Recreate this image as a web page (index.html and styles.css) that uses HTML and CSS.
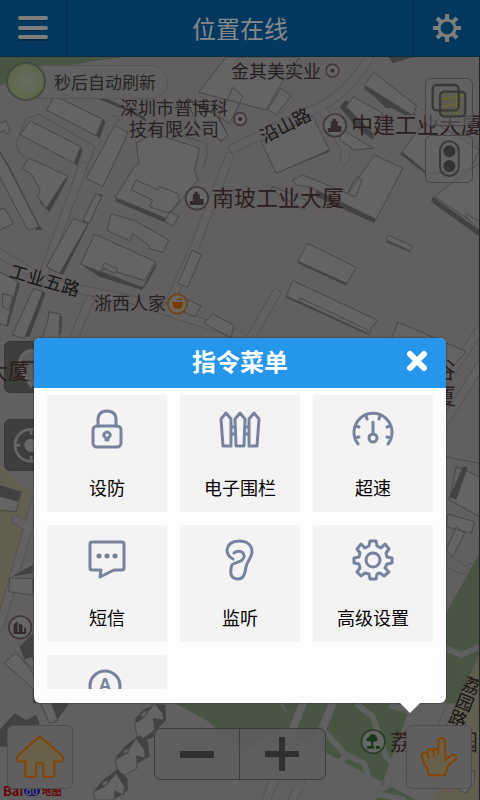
FILE: index.html
```html
<!DOCTYPE html>
<html lang="zh-CN">
<head>
    <meta charset="UTF-8">
    <meta name="viewport" content="width=device-width, initial-scale=1.0">
    <title>位置在线</title>
    <link rel="stylesheet" href="styles.css">
</head>
<body>
    <header class="topbar">
        <button class="top-btn menu-btn" aria-label="菜单">
            <svg width="30" height="26" viewBox="0 0 30 26"><path class="menu-shadow" d="M2 4h26M2 14h26M2 24h26"/><path class="menu-line" d="M2 3h26M2 13h26M2 22h26"/></svg>
        </button>
        <h1>位置在线</h1>
        <button class="top-btn set-btn" aria-label="设置">
            <svg width="30" height="30" viewBox="-15 -15 30 30">
                <circle class="cog-ring" r="8"/>
                <path class="cog-teeth" d="M0-14V-9M0 14V9M-14 0H-9M14 0H9M-10-10L-6-6M10-10L6-6M-10 10L-6 6M10 10L6 6"/>
            </svg>
        </button>
    </header>

    <main class="map">
        <svg class="map-art" viewBox="0 171 1440 2229" preserveAspectRatio="xMidYMid slice">
            <!-- parks and ground -->
            <path class="park" d="M0 171H380Q200 190 90 225L0 258Z"/>
            <path class="park" d="M1860 1838L1440 1660L1340 1838V2110H1530L1400 2400H1130L1240 2100H720L520 2106L620 2160L720 2240V2110H850L870 2160L850 2190L1250 2400H1310L1350 2200L1440 1960Z"/>
            <path class="park" d="M520 2100L620 2160L720 2240V2260L880 2170L840 2110Z"/>
            <path class="sand" d="M0 1390L66 1460L100 1470V1525L30 1820L0 1900Z"/>
            <path class="sand" d="M1440 1960L1345 2180L1310 2400H1440Z"/>
            <!-- roads -->
            <path class="road-edge" d="M1110 171Q1040 290 940 330L700 445M970 330L1040 450L1035 480M690 470L590 730L500 930M250 500L135 815M0 760L150 850L400 900L720 1005M270 900L225 1010M830 880L750 1020M110 1500L0 1880M50 1560L100 1590M1000 2110L880 2400M910 2110L800 2400M1440 990L1240 1290M1440 1100L1240 1420"/>
            <path class="road" d="M1110 171Q1040 290 940 330L700 445M970 330L1040 450L1035 480M690 470L590 730L500 930M250 500L135 815M0 760L150 850L400 900L720 1005M270 900L225 1010M830 880L750 1020M110 1500L0 1880M50 1560L100 1590M1000 2110L880 2400M910 2110L800 2400M1440 990L1240 1290M1440 1100L1240 1420"/>
            <path class="trail" d="M1340 1945L1385 1965L1440 1940M1070 2110L1120 2150L1160 2270L1220 2330M960 2180L1040 2265L1000 2310L1020 2400M1040 2265L1095 2290L1120 2380M1220 2330L1120 2380L1000 2390L870 2345M1170 2115L1290 2150M1330 2110L1290 2190M1120 2380L1220 2400"/>
            <path class="road-edge line" d="M1440 1950L1310 2250M1430 1920L1290 2230"/>

            <!-- blocks, upper left -->
            <path class="shade" d="M141 330L290 407L300 417L318 365L310 358L165 292ZM62 400L225 490L232 500L250 450L240 440L90 370ZM285 292L400 340L440 365L435 350L300 285Z"/>
            <path class="roof" d="M165 288L310 358L290 407L141 330ZM92 362L244 440L224 490L62 404ZM345 377L386 398L310 560L260 535ZM0 370L20 362L32 395L20 402L14 392L0 395Z"/>
            <path class="outline" d="M50 430L80 355L120 343L287 440L260 510M50 430L60 460L120 500M335 350Q360 340 358 360L345 377M500 390L620 430L625 460L610 510"/>
            <path class="shade" d="M0 450L30 500L120 678L130 690L110 690L0 480ZM205 535L150 637L120 605L130 600L145 615L190 530Z"/>
            <path class="roof" d="M0 458L26 500L118 680L85 690L0 530ZM88 474L205 528L195 540L140 625L115 590L122 570L98 525L68 505ZM0 630L15 625L42 670L0 692Z"/>
            <path class="shade" d="M347 595L500 655L498 668L350 605ZM250 665L270 670L310 585L300 582ZM175 815L190 825L268 672L258 672ZM244 793L316 818L430 862L468 790L470 800L445 845L428 870L300 830Z"/>
            <path class="roof" d="M410 430L465 400L600 445L585 510L595 540L500 655L347 592L405 500L418 490ZM290 580L306 590L270 670L250 660ZM222 655L265 672L180 820L140 800ZM335 642L402 660L508 720L490 757L450 745L447 735L400 700L390 722L322 692ZM285 702L468 785L435 842L318 805L300 815L244 792Z"/>
            <path class="roof" d="M410 540L475 570L480 560L535 580L540 600L510 640L450 620L460 600L395 570ZM510 635L537 650L520 678L495 665ZM315 788L355 808L345 820L308 802Z"/>
            <path class="shade" d="M15 975L25 980L62 850L50 845ZM70 1010L90 1010L138 880L128 872ZM175 1010L185 1000L188 950L178 940Z"/>
            <path class="roof" d="M0 815L55 845L20 978L0 970ZM102 865L130 875L75 1015L38 1005ZM10 880L40 890L28 930L8 920ZM148 935L182 942L178 1020H125L145 960Z"/>

            <!-- blocks, upper middle -->
            <path class="shade" d="M560 290L660 350L685 405L665 425L600 370Z"/>
            <path class="roof" d="M680 171H900L840 260L800 330L598 277ZM560 300L650 345L685 405L668 422L600 385ZM700 262L730 290L690 370L660 350ZM845 265L875 288L830 345L805 328Z"/>
            <path class="shade" d="M785 420L830 520L990 455L985 445L830 505ZM1092 263L1110 250L1250 345H1215L1180 325L1160 325L1125 290ZM1020 320L1040 300L1130 370L1120 420L1070 380ZM1300 590L1440 690V710L1295 605ZM1205 455L1285 515L1275 520L1202 462ZM950 570L1130 655L1125 670L950 590ZM1167 171L1180 190L1240 171Z"/>
            <path class="roof" d="M785 425L940 350L990 450L830 520ZM1122 217L1252 318L1238 345L1095 255ZM1062 290L1150 340L1125 405L1040 320ZM1030 390L1122 445L1065 450L1020 420ZM1125 465L1210 505L1130 658L930 560L890 555L880 540L910 525L1045 580ZM1070 530L1088 540L1068 592L1044 580ZM1285 355L1440 450L1410 510L1285 520L1207 455ZM1370 540L1440 490V680L1305 590Z"/>
            <path class="roof" d="M1400 640L1440 665V690L1400 650ZM820 560L920 600L915 630L815 570Z"/>

            <!-- blocks, middle right -->
            <path class="shade" d="M895 785L1042 848L1038 856L895 790ZM860 888L1110 998L1108 1005L860 893ZM1160 722L1232 750L1230 756L1160 726Z"/>
            <path class="roof" d="M924 730L1070 802L1042 850L895 784ZM880 842L1133 960L1125 975L1120 975L1108 1003L860 888ZM902 894L1105 990L1100 998L898 904ZM1166 705L1238 738L1232 753L1160 720ZM578 750L606 764L564 862L535 850ZM640 942L703 975L695 1013L613 970ZM525 880L605 918L585 950L500 910ZM1195 966L1400 1055L1350 1110H1140Z"/>

            <!-- blocks around the dialog -->
            <path class="roof" d="M0 1460L65 1475L50 1535L0 1530ZM30 1735L100 1735V1785L28 1775ZM1370 1400L1440 1430V1550L1350 1500ZM1345 1542L1425 1565L1415 1600L1340 1580ZM1370 1580L1395 1600L1360 1670L1340 1650ZM1285 1350L1360 1375L1440 1390"/>
            <path class="shade" d="M0 1455L65 1475L55 1505L0 1490ZM1405 1400L1370 1500L1350 1490L1390 1400ZM60 1940L100 1900V2110L210 2110L165 2170L100 2040ZM0 2190L45 2140L80 2160L110 2145L120 2170L60 2240L0 2240ZM35 1730L100 1695V1720Z"/>
            <path class="roof" d="M48 1958L125 2030L175 2160L150 2170L105 2070L15 1990ZM70 1980L95 1970L130 2025L110 2035Z"/>
            <path class="outline" d="M1340 1680L1360 1670L1400 1700L1410 1690L1440 1705M1340 1700L1380 1720L1440 1725"/>

            <!-- stepped houses along the path -->
            <path class="shade" d="M405 2160L430 2130L470 2112L498 2115L500 2160L470 2190L460 2200L485 2200L430 2225Z"/>
            <path class="roof" d="M405 2170L430 2155L465 2110L490 2140L492 2160L462 2155L465 2190L440 2210L415 2225ZM425 2140L443 2130L440 2145L425 2155Z"/>
            <path class="shade" d="M350 2270L375 2240L420 2205L445 2225L450 2270L415 2290L380 2320Z"/>
            <path class="roof" d="M347 2280L380 2260L410 2215L435 2250L437 2275L412 2268L412 2305L375 2325L355 2320ZM373 2250L388 2245L386 2260L373 2262Z"/>
            <path class="shade" d="M285 2370L310 2340L355 2308L383 2335L386 2370L350 2395H300Z"/>
            <path class="roof" d="M282 2375L315 2360L350 2320L375 2360L372 2385L345 2372V2400H285ZM310 2345L325 2340L323 2355L308 2357Z"/>
            <path class="roof" d="M1410 2320L1425 2310V2345L1400 2380L1380 2370Z"/>

            <!-- place markers -->
            <g class="marker"><circle cx="999" cy="212" r="19"/><circle class="dot" cx="999" cy="212" r="6"/></g>
            <g class="marker"><circle cx="722" cy="357" r="19"/><circle class="dot" cx="722" cy="357" r="6"/></g>
            <g class="marker"><circle cx="1006" cy="376" r="34"/><path class="dot" d="M985 396V384H994V364H999V356H1009V364H1015V378H1026V396Z"/></g>
            <g class="marker"><circle cx="592" cy="595" r="34"/><path class="dot" d="M571 615V603H580V583H585V575H595V583H601V597H612V615Z"/></g>
            <g class="marker"><circle cx="62" cy="1882" r="34"/><path class="dot" d="M42 1902V1874L54 1864V1896H58V1870L69 1876V1896H74V1882L80 1884V1902Z"/></g>
            <g class="marker food"><circle cx="534" cy="912" r="29"/><path class="dot" d="M518 906H551Q550 920 542 926H527Q519 920 518 906ZM527 900L545 895L551 900Z"/></g>
            <g class="marker tree"><circle cx="1121" cy="2225" r="35"/><path class="dot" d="M1101 2222Q1100 2214 1108 2212Q1110 2203 1119 2203Q1130 2204 1132 2213Q1139 2220 1129 2224L1121 2225V2238H1124V2246H1103V2238H1115V2225ZM1129 2238H1141V2246H1129Z"/></g>
        </svg>

        <span class="place p-jinqi">金其美实业</span>
        <span class="place p-pubo">深圳市普博科<br>技有限公司</span>
        <span class="place p-yanshan">沿山路</span>
        <span class="place large p-zhongjian">中建工业大厦</span>
        <span class="place large p-nanbo">南玻工业大厦</span>
        <span class="place p-wulu">工业五路</span>
        <span class="place p-zhexi">浙西人家</span>
        <span class="place large p-left">大厦</span>
        <span class="place large p-right">谷<br>厦</span>
        <span class="place p-liyuan">荔园路</span>
        <span class="place large p-park">荔枝公园</span>

        <div class="refresh"><span class="refresh-dot"></span><span class="refresh-text">秒后自动刷新</span></div>

        <div class="tools-right">
            <button aria-label="图层">
                <svg width="46" height="46" viewBox="0 0 138 138">
                    <rect class="sheet-back" x="42" y="38" width="76" height="74" rx="12"/>
                    <path class="sheet-map" d="M50 60L112 50M50 82L112 72M92 44V106"/>
                    <rect class="sheet" x="20" y="18" width="78" height="76" rx="12"/>
                </svg>
            </button>
            <button aria-label="路况">
                <svg width="46" height="46" viewBox="0 0 138 138">
                    <rect class="lamp-box" x="42" y="16" width="56" height="104" rx="28"/>
                    <circle class="lamp" cx="70" cy="46" r="18"/><circle class="lamp" cx="70" cy="90" r="18"/>
                </svg>
            </button>
        </div>

        <div class="tools-left">
            <button aria-label="车辆"><svg width="50" height="50" viewBox="0 0 150 150"><path class="pin" d="M78 132Q44 84 44 62A36 36 0 0 1 116 62Q116 84 78 132Z"/><path class="pin-car" d="M54 76V60H106V76"/></svg></button>
            <button aria-label="定位"><svg width="50" height="50" viewBox="0 0 150 150"><circle class="aim" cx="78" cy="76" r="48"/><path class="aim" d="M78 28V44M78 108V124M30 76H46M110 76H126"/><circle class="aim-dot" cx="78" cy="76" r="20"/></svg></button>
        </div>

        <div class="logo"><b>Bai</b><i>du</i><b>地图</b></div>

        <button class="corner home" aria-label="主页">
            <svg width="64" height="62" viewBox="24 258 192 186"><path class="orange" d="M113 294Q119 289 126 294L186 348Q193 356 185 363Q178 368 163 362V405Q163 411 157 411H130V374Q130 370 126 370H112Q108 370 108 374V411H81Q76 411 76 405V362Q62 368 54 363Q46 356 53 348Z"/></svg>
        </button>

        <div class="zoom">
            <button aria-label="缩小"><svg width="34" height="34" viewBox="0 0 34 34"><rect y="14" width="34" height="7" rx="1"/></svg></button>
            <button aria-label="放大"><svg width="34" height="34" viewBox="0 0 34 34"><path d="M14 0H20V14H34V20H20V34H14V20H0V14H14Z"/></svg></button>
        </div>

        <button class="corner hand" aria-label="指令">
            <svg width="64" height="62" viewBox="502 260 192 186"><path class="orange" d="M568 408L562 387L552 372L547 349Q546 341 553 340Q560 339 564 345Q562 332 570 330Q577 329 581 338Q580 329 587 328Q593 328 596 334V305Q597 296 605 296Q614 296 615 305L618 361L637 347Q647 344 650 352Q651 356 646 361L627 378L615 408Z"/><path class="orange-line" d="M564 344L568 356M581 337L584 350M596 334V343"/></svg>
        </button>

        <section class="dialog" role="dialog" aria-labelledby="dialog-title">
            <div class="dialog-head">
                <h2 id="dialog-title">指令菜单</h2>
                <button class="close" aria-label="关闭"><svg width="22" height="22" viewBox="0 0 22 22"><path d="M4 4L18 18M18 4L4 18"/></svg></button>
            </div>
            <div class="dialog-body">
                <div class="tiles">
                    <button class="tile">
                        <svg viewBox="0 0 42 42"><rect x="7" y="17" width="28" height="21" rx="4"/><path d="M12 17V11Q12 2 21 2T30 11V17"/><path d="M20 31V29Q17 27 18 25Q21 21 24 25Q25 27 22 29V31Z"/></svg>
                        <span>设防</span>
                    </button>
                    <button class="tile">
                        <svg viewBox="0 0 42 42"><path d="M2 10L7 4L12 10V37H4ZM16 10L21 4L26 10L25 37H17ZM30 10L35 4L40 10L38 37H30ZM12 18H16M12 25H16M26 18H30M26 25H30"/></svg>
                        <span>电子围栏</span>
                    </button>
                    <button class="tile">
                        <svg viewBox="0 0 42 42"><path d="M6 35A19 19 0 1 1 36 35M21 13V25M14 7L15 10M28 7L27 10M4 17L7 18M38 17L35 18M3 29L7 28M39 29L35 28"/><circle cx="21" cy="29" r="4"/></svg>
                        <span>超速</span>
                    </button>
                    <button class="tile">
                        <svg viewBox="0 0 42 42"><path d="M6 3H36Q38 3 38 5V29Q38 31 36 31H28L14 38L15 31H6Q4 31 4 29V5Q4 3 6 3Z"/><path class="dots" d="M13 17H13.100M21 17H21.100M29 17H29.100"/></svg>
                        <span>短信</span>
                    </button>
                    <button class="tile">
                        <svg viewBox="0 0 42 42"><path d="M14 20C8 17 8 13 8 11C9 4 14 2 20 2C28 2 33 6 33 13C33 18 28 22 27 28C26 34 25 40 19 40C13 40 11 36 12 30C12 24 15 25 19 23C23 22 26 19 25 16C24 12 19 11 15 14"/></svg>
                        <span>监听</span>
                    </button>
                    <button class="tile">
                        <svg viewBox="0 0 42 42"><path d="M18 2H24L25 7L29 9L33 5L37 10L34 14L35 18L40 19V24L35 25L33 29L37 33L32 37L28 34L25 35L24 40H18L17 35L13 34L9 37L5 33L8 29L7 25L2 24V19L7 18L8 14L5 10L9 5L13 9L17 7Z"/><circle cx="21" cy="21" r="7"/></svg>
                        <span>高级设置</span>
                    </button>
                    <button class="tile">
                        <svg viewBox="0 0 42 42"><circle cx="19" cy="17" r="15"/><text class="letter" x="19" y="22">A</text></svg>
                    </button>
                </div>
            </div>
        </section>
    </main>
</body>
</html>
```
FILE: styles.css
```css
* { box-sizing: border-box; }
body { margin: 0; min-height: 100vh; display: flex; flex-direction: column; font-family: "Noto Sans CJK SC", "Liberation Sans", sans-serif; background: #625f60; overflow: hidden; }
button { padding: 0; border: none; background: none; font-family: inherit; cursor: pointer; }
svg { display: block; }
h1, h2 { margin: 0; font-size: 24px; line-height: 36px; }

/* top bar */
.topbar { display: flex; align-items: center; height: 57px; background: #05385e; border-bottom: 1px solid #0b2c45; }
.topbar h1 { flex: 1; text-align: center; font-weight: 400; color: #85898c; }
.top-btn { width: 67px; height: 56px; display: flex; align-items: center; justify-content: center; }
.menu-btn { border-right: 1px solid #032b49; }
.set-btn { border-left: 1px solid #032b49; }
.menu-line, .menu-shadow { stroke: #7d7d7d; stroke-width: 4; stroke-linecap: round; }
.menu-shadow { stroke: #072b46; }
.cog-ring { fill: none; stroke: #7d7d7d; stroke-width: 3; }
.cog-teeth { stroke: #7d7d7d; stroke-width: 4; }

/* map */
.map { position: relative; flex: 1; overflow: hidden; border-right: 1px solid #262626; }
.map-art { position: absolute; inset: 0; width: 100%; height: 100%; }
.park { fill: #485542; }
.sand { fill: #625f51; }
.road, .road-edge { fill: none; stroke-linecap: round; stroke-linejoin: round; }
.road-edge { stroke: #535152; stroke-width: 28; }
.road { stroke: #636162; stroke-width: 23; }
.line { stroke-width: 3; }
.trail { fill: none; stroke: #5e6060; stroke-width: 18; }
.roof { fill: #646464; stroke: #484747; stroke-width: 3; }
.shade { fill: #434242; }
.outline { fill: none; stroke: #505050; stroke-width: 3; }
.marker circle { fill: #666; stroke: #40373a; stroke-width: 5; }
.marker .dot { fill: #352a2c; stroke: none; }
.food circle { fill: #6a665f; stroke: #70411a; }
.food .dot { fill: #783b00; }
.tree circle { stroke: #263d24; }
.tree .dot { fill: #1b3519; }

.place { position: absolute; font-size: 18px; line-height: 21px; color: #252122; white-space: nowrap; text-align: center; }
.large { font-size: 22px; line-height: 26px; color: #2c1d1e; }
.p-jinqi { left: 231px; top: 3px; }
.p-pubo { left: 120px; top: 40px; }
.p-yanshan { left: 258px; top: 57px; transform: rotate(-27deg); color: #151515; }
.p-zhongjian { left: 351px; top: 53px; }
.p-nanbo { left: 212px; top: 126px; }
.p-wulu { left: 9px; top: 212px; transform: rotate(16deg); color: #151515; }
.p-zhexi { left: 94px; top: 235px; }
.p-left { left: -14px; top: 299px; z-index: 1; }
.p-right { left: 434px; top: 298px; }
.p-liyuan { left: 454px; top: 618px; writing-mode: vertical-rl; transform: rotate(22deg); color: #151515; }
.p-park { left: 390px; top: 670px; }

/* map controls */
.refresh { position: absolute; left: 6px; top: 5px; display: flex; align-items: center; height: 39px; }
.refresh-dot { width: 40px; height: 39px; border-radius: 50%; border: 2px solid #454a42; background: radial-gradient(#696c64, #58643f); z-index: 1; }
.refresh-text { height: 34px; margin-left: -20px; padding: 0 11px 0 27px; border: 1px solid #555; border-radius: 17px; background: #616161; font-size: 17px; line-height: 32px; color: #252525; }
.tools-right { position: absolute; right: 6px; top: 21px; display: flex; flex-direction: column; gap: 9px; }
.tools-right button { width: 48px; height: 48px; border: 1px solid #454545; border-radius: 6px; background: rgba(100, 100, 100, 0.6); }
.sheet, .sheet-back { fill: none; stroke: #393939; stroke-width: 7; }
.sheet-back { fill: #5c5c50; }
.sheet-map { stroke: #6c6932; stroke-width: 5; }
.lamp-box { fill: none; stroke: #393939; stroke-width: 6; }
.lamp { fill: #333; }
.tools-left { position: absolute; left: 4px; top: 284px; display: flex; flex-direction: column; gap: 26px; }
.tools-left button { width: 52px; height: 52px; border: 1px solid #383838; border-radius: 6px; background: rgba(54, 54, 53, 0.8); }
.pin, .aim { fill: none; stroke: #666; stroke-width: 8; }
.pin { fill: #5c5c5c; }
.pin-car { fill: none; stroke: #333; stroke-width: 7; }
.aim-dot { fill: #666; }
.corner { position: absolute; bottom: 11px; width: 66px; height: 64px; border: 1px solid #4e4e4e; border-radius: 6px; background: #5f5f5f; }
.home { left: 7px; }
.hand { right: 7px; }
.orange { fill: #686048; stroke: #824400; stroke-width: 6; stroke-linejoin: round; }
.orange-line { stroke: #824400; stroke-width: 5; stroke-linecap: round; }
.zoom { position: absolute; left: 50%; bottom: 20px; transform: translateX(-50%); width: 172px; height: 52px; display: flex; border: 1px solid #3c3c3c; border-radius: 7px; background: rgba(94, 94, 94, 0.85); }
.zoom button { flex: 1; display: flex; align-items: center; justify-content: center; fill: #303030; }
.zoom button + button { border-left: 1px solid #3c3c3c; }
.logo { position: absolute; left: 3px; bottom: 2px; display: flex; align-items: center; height: 14px; font-size: 13px; line-height: 14px; color: #650608; }
.logo i { padding: 0 2px; border-radius: 5px; background: #151568; color: #777; font-size: 10px; line-height: 10px; font-style: normal; }
.logo b:last-child { font-size: 10px; margin-left: 2px; }

/* command dialog */
.dialog { position: absolute; left: 34px; right: 33px; top: 281px; z-index: 2; border-radius: 6px; background: #fdfdfd; box-shadow: 0 0 2px #222; }
.dialog::after { content: ""; position: absolute; right: 26px; top: 100%; border: 10px solid transparent; border-top-color: #fdfdfd; border-bottom: none; }
.dialog-head { display: flex; align-items: center; height: 50px; border-radius: 6px 6px 0 0; background: #2596ea; padding: 0 18px 4px 40px; }
.dialog-head h2 { flex: 1; text-align: center; font-weight: 700; color: #fff; }
.close path { stroke: #fff; stroke-width: 6; stroke-linecap: round; }
.dialog-body { padding: 7px 13px 14px; }
.tiles { display: grid; grid-template-columns: repeat(3, 1fr); grid-auto-rows: 117px; gap: 13px; height: 294px; overflow: hidden; }
.tile { display: flex; flex-direction: column; align-items: center; gap: 23px; padding-top: 14px; background: #f3f3f3; font-size: 18px; line-height: 27px; color: #000; }
.tile svg { width: 42px; height: 42px; fill: none; stroke: #77829c; stroke-width: 3; stroke-linejoin: round; stroke-linecap: round; }
.tile .dots { stroke-width: 5; }
.tile .letter { fill: #77829c; stroke: none; font-family: "Liberation Sans", sans-serif; font-size: 18px; font-weight: 700; text-anchor: middle; }
```
